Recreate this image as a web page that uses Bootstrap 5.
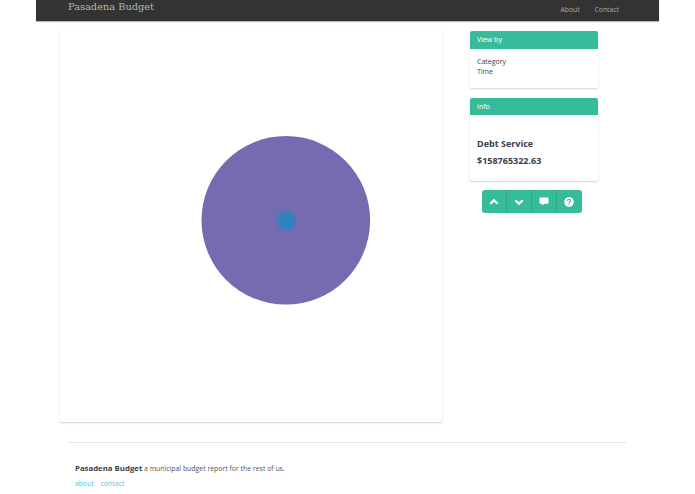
<!DOCTYPE html>
<html lang="en">
<head>
  <meta charset="UTF-8">
  <title>Pasadena Budget</title>
  <link href="https://cdn.jsdelivr.net/npm/bootstrap@5.3.0/dist/css/bootstrap.min.css" rel="stylesheet">
  <style>
    body { font-family: "Open Sans", "Noto Sans", sans-serif; font-size: 7px; color: #444; background: #fff; }
    .page-wrap { width: 623px; margin: 0 auto; }
    .top-bar { height: 21px; background: #333; padding: 0 40px 0 32px; box-shadow: 0 1px 1px #bbb; }
    .top-brand { font-family: "DejaVu Serif", serif; font-size: 9.8px; color: #b5b5b5; margin-top: -6px; text-decoration: none; }
    .top-link { color: #aaa; text-decoration: none; font-size: 6.8px; }
    .main-area { padding: 9px 0 0 24px; gap: 28px; }
    .chart-box { width: 382px; height: 392px; background: #fff; box-shadow: 0 1px 2px rgba(0,0,0,.2); border-radius: 2px; }
    .chart-box svg { display: block; }
    .side-col { width: 128px; padding-top: 1px; }
    .side-card { border: 0; border-radius: 2px; box-shadow: 0 1px 2px rgba(0,0,0,.18); font-size: 7px; color: #444; }
    .view-card { margin-bottom: 9.5px; }
    .info-card { margin-bottom: 9px; }
    .side-card .card-header { background: #37bc9b; color: #fff; border: 0; border-radius: 2px 2px 0 0; height: 17.5px; padding: 0 7px; line-height: 17.5px; }
    .view-body { height: 39.5px; padding: 8px 7px 0; line-height: 10px; }
    .info-body { height: 66px; padding: 22px 7px 0; font-size: 9px; font-weight: 700; color: #3a3f47; }
    .info-body p { margin: 0 0 4px; line-height: 13px; }
    .tool-group { width: 100.5px; margin-left: 11.5px; }
    .tool-btn { background: #37bc9b; border: 0; border-left: 1px solid #2fa888; border-radius: 0; height: 23px; padding: 0; flex: 1; color: #fff; line-height: 0; }
    .tool-btn:first-child { border-left: 0; border-radius: 3px 0 0 3px; }
    .tool-btn:last-child { border-radius: 0 3px 3px 0; }
    .foot-rule { margin: 20px 0 0 32px; width: 557px; border-top: 1px dotted #ccc; }
    .foot-area { padding: 20px 0 0 39px; font-size: 6.9px; color: #555; }
    .foot-area p { margin: 0 0 5px; line-height: 10px; }
    .foot-area strong { color: #3a3f47; font-size: 7.8px; }
    .foot-area a { color: #4fc1e9; text-decoration: none; margin-right: 5px; }
  </style>
</head>
<body>
<div class="page-wrap">
  <nav class="top-bar d-flex align-items-center justify-content-between">
    <a class="top-brand" href="#">Pasadena Budget</a>
    <div class="d-flex" style="gap:15px">
      <a class="top-link" href="#">About</a>
      <a class="top-link" href="#">Contact</a>
    </div>
  </nav>

  <div class="main-area d-flex align-items-start">
    <div class="chart-box">
      <svg width="382" height="392" viewBox="0 0 382 392">
        <circle cx="225.8" cy="190.3" r="84.3" fill="#756bb1"/>
        <circle cx="226" cy="190.5" r="9.8" fill="#3182bd"/>
      </svg>
    </div>
    <div class="side-col">
      <div class="card side-card view-card">
        <div class="card-header">View by</div>
        <div class="view-body">Category<br>Time</div>
      </div>
      <div class="card side-card info-card">
        <div class="card-header">Info</div>
        <div class="info-body">
          <p>Debt Service</p>
          <p>$158765322.63</p>
        </div>
      </div>
      <div class="btn-group d-flex tool-group" role="group">
        <button class="btn tool-btn" type="button">
          <svg width="10" height="8" viewBox="0 0 11 8"><path d="M1.5 6 5.5 2l4 4" fill="none" stroke="#fff" stroke-width="2.4"/></svg>
        </button>
        <button class="btn tool-btn" type="button">
          <svg width="10" height="8" viewBox="0 0 11 8"><path d="M1.5 2l4 4 4-4" fill="none" stroke="#fff" stroke-width="2.4"/></svg>
        </button>
        <button class="btn tool-btn" type="button">
          <svg width="10" height="9" viewBox="0 0 11 10"><path d="M1.5.5h8a1 1 0 0 1 1 1v5a1 1 0 0 1-1 1H6L3.5 9.5v-2h-2a1 1 0 0 1-1-1v-5a1 1 0 0 1 1-1z" fill="#fff"/></svg>
        </button>
        <button class="btn tool-btn" type="button">
          <svg width="10" height="10" viewBox="0 0 10 10"><circle cx="5" cy="5" r="4.8" fill="#fff"/><path d="M3.4 3.9C3.5 2.9 4.2 2.4 5 2.4c1 0 1.6.6 1.6 1.3 0 1.1-1.5 1.1-1.5 2.2" fill="none" stroke="#37bc9b" stroke-width="1.1"/><rect x="4.5" y="6.6" width="1.2" height="1.2" fill="#37bc9b"/></svg>
        </button>
      </div>
    </div>
  </div>

  <div class="foot-rule"></div>
  <div class="foot-area">
    <p><strong>Pasadena Budget</strong> a municipal budget report for the rest of us.</p>
    <p><a href="#">about</a> <a href="#">contact</a></p>
  </div>
</div>
</body>
</html>
